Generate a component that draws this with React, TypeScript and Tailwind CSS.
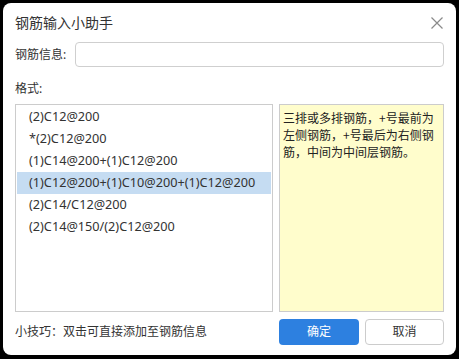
const FORMATS = [
  "(2)C12@200",
  "*(2)C12@200",
  "(1)C14@200+(1)C12@200",
  "(1)C12@200+(1)C10@200+(1)C12@200",
  "(2)C14/C12@200",
  "(2)C14@150/(2)C12@200",
];

const SELECTED = 3;

export default function App() {
  return (
    <div
      className="h-[359px] w-[459px] overflow-hidden bg-black pl-[3px] pt-[3px]"
      style={{ fontFamily: '"Noto Sans", "Noto Sans CJK SC", sans-serif' }}
    >
      <div className="flex h-[352px] w-[453px] flex-col rounded-[8px] bg-white px-[12px] pb-[10px] text-[12px] text-[#333]">
        {/* 标题 */}
        <div className="flex h-[39px] shrink-0 items-center justify-between">
          <span className="text-[14px] text-[#333]">钢筋输入小助手</span>
          <svg width="12" height="12" viewBox="0 0 12 12" className="mr-[1px] mt-[1px]">
            <path d="M0.5 0.5 L11.5 11.5 M11.5 0.5 L0.5 11.5" stroke="#8a8a8a" strokeWidth="1.2" fill="none" />
          </svg>
        </div>

        {/* 钢筋信息 */}
        <div className="flex h-[25px] shrink-0 items-center">
          <label className="w-[60px] shrink-0">钢筋信息:</label>
          <input
            type="text"
            className="h-full flex-1 rounded-[4px] border border-[#cfcfcf] px-2 outline-none"
          />
        </div>

        <div className="mt-[13px] h-[18px] shrink-0 leading-[18px]">格式:</div>

        <div className="mt-[6px] flex h-[208px] shrink-0 gap-[6px]">
          {/* 列表 */}
          <div className="w-[258px] shrink-0 border border-[#cccccc] px-[1px] pt-[1px] text-[12.7px]">
            {FORMATS.map((f, i) => (
              <div
                key={f}
                className={`flex h-[22px] items-center pl-[12px] ${
                  i === SELECTED ? "bg-[#c5dcf2]" : ""
                }`}
              >
                {f}
              </div>
            ))}
          </div>

          {/* 说明 */}
          <div
            className="flex-1 border border-[#cccccc] bg-[#fffdcc] px-[3px] pt-[4px] leading-[17px] text-[#222]"
            style={{ fontFamily: '"Noto Sans CJK SC", sans-serif' }}
          >
            三排或多排钢筋，+号最前为左侧钢筋，+号最后为右侧钢筋，中间为中间层钢筋。
          </div>
        </div>

        {/* 底部 */}
        <div className="mt-[7px] flex h-[26px] shrink-0 items-center">
          <span className="flex-1">小技巧：双击可直接添加至钢筋信息</span>
          <button className="h-full w-[80px] rounded-[4px] bg-[#2d80e0] text-[12px] text-white">
            确定
          </button>
          <button className="ml-[6px] h-full w-[79px] rounded-[4px] border border-[#cccccc] bg-white text-[12px] text-[#333]">
            取消
          </button>
        </div>
      </div>
    </div>
  );
}
